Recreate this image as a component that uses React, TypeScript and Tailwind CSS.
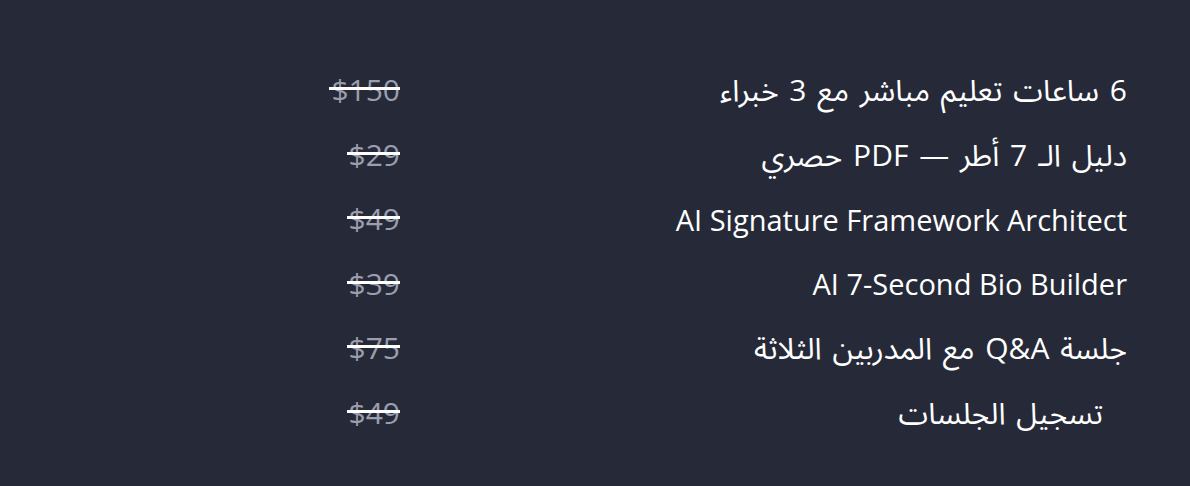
const rows = [
  { label: "6 ساعات تعليم مباشر مع 3 خبراء", price: "$150", ar: true },
  { label: "دليل الـ 7 أطر — PDF حصري", price: "$29", ar: true },
  { label: "AI Signature Framework Architect", price: "$49" },
  { label: "AI 7-Second Bio Builder", price: "$39" },
  { label: "جلسة Q&A مع المدربين الثلاثة", price: "$75", ar: true },
  { label: "تسجيل الجلسات", price: "$49", ar: true, indent: true },
];

function Price({ value }: { value: string }) {
  return (
    <span className="relative inline-block text-[30px] leading-none text-[#9a9eae]">
      {value}
      <span className="absolute -left-[2px] right-0 top-[12px] h-[3px] bg-white" />
    </span>
  );
}

export default function App() {
  return (
    <main
      className="min-h-[486px] w-full bg-[#262a38] pt-[58px] text-white"
      style={{ fontFamily: '"Open Sans", "Noto Sans Arabic", "DejaVu Sans", sans-serif' }}
    >
      <div className="flex flex-col">
        {rows.map((row) => (
          <div key={row.label} className="grid h-[64.5px] grid-cols-[400px_1fr] items-center">
            <div className="flex justify-end">
              <Price value={row.price} />
            </div>
            <div
              dir="rtl"
              className={`pr-[63px] leading-none ${row.ar ? "text-[30px] [word-spacing:3px]" : "text-[29px]"}`}
            >
              <span className={row.indent ? "mr-[24px]" : ""}>{row.label}</span>
            </div>
          </div>
        ))}
      </div>
    </main>
  );
}
